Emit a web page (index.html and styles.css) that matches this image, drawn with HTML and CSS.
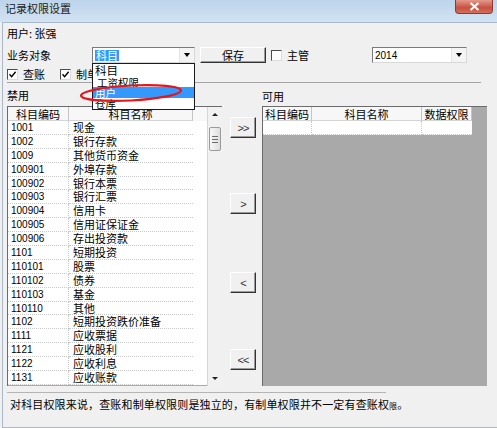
FILE: index.html
```html
<!DOCTYPE html>
<html lang="zh-CN">
<head>
  <meta charset="UTF-8" />
  <title>记录权限设置</title>
  <link rel="stylesheet" href="styles.css">
</head>
<body>
  <div class="window">
    <div class="titlebar">
      <span class="title">记录权限设置</span>
      <span class="close">
        <svg width="11" height="9" viewBox="0 0 11 9"><path d="M1.5 1 L9.5 8 M9.5 1 L1.5 8" stroke="#fff" stroke-width="2.2" /></svg>
      </span>
    </div>

    <div class="body">
      <div class="user">用户: 张强</div>

      <div class="toolbar">
        <span class="field-label">业务对象</span>
        <div class="combo combo-type">
          <span class="sel">科目</span>
          <span class="arrow"><i></i></span>
          <ul class="droplist">
            <li>科目</li>
            <li class="clipped"><span>工资权限</span></li>
            <li class="hl">用户</li>
            <li>仓库</li>
          </ul>
        </div>
        <button class="btn btn-save">保存</button>
        <span class="check"></span><span class="check-text">主管</span>
        <div class="combo combo-year">
          <span class="year">2014</span>
          <span class="arrow"><i></i></span>
        </div>
      </div>

      <div class="checks">
        <span class="check on"><svg width="7" height="7" viewBox="0 0 7 7"><path d="M0.5 3.2 L2.6 5.6 L6.6 0.8" fill="none" stroke="#000" stroke-width="1.4" /></svg></span><span class="check-text">查账</span>
        <span class="check on second"><svg width="7" height="7" viewBox="0 0 7 7"><path d="M0.5 3.2 L2.6 5.6 L6.6 0.8" fill="none" stroke="#000" stroke-width="1.4" /></svg></span><span class="check-text">制单</span>
      </div>

      <div class="sep"></div>

      <div class="lists">
        <div class="pane">
          <div class="pane-label">禁用</div>
          <div class="grid grid-left">
            <div class="grid-main">
              <div class="grid-head"><span class="c-code">科目编码</span><span class="c-name">科目名称</span></div>
              <div class="grid-row"><span class="c-code">1001</span><span class="c-name">现金</span></div>
              <div class="grid-row"><span class="c-code">1002</span><span class="c-name">银行存款</span></div>
              <div class="grid-row"><span class="c-code">1009</span><span class="c-name">其他货币资金</span></div>
              <div class="grid-row"><span class="c-code">100901</span><span class="c-name">外埠存款</span></div>
              <div class="grid-row"><span class="c-code">100902</span><span class="c-name">银行本票</span></div>
              <div class="grid-row"><span class="c-code">100903</span><span class="c-name">银行汇票</span></div>
              <div class="grid-row"><span class="c-code">100904</span><span class="c-name">信用卡</span></div>
              <div class="grid-row"><span class="c-code">100905</span><span class="c-name">信用证保证金</span></div>
              <div class="grid-row"><span class="c-code">100906</span><span class="c-name">存出投资款</span></div>
              <div class="grid-row"><span class="c-code">1101</span><span class="c-name">短期投资</span></div>
              <div class="grid-row"><span class="c-code">110101</span><span class="c-name">股票</span></div>
              <div class="grid-row"><span class="c-code">110102</span><span class="c-name">债券</span></div>
              <div class="grid-row"><span class="c-code">110103</span><span class="c-name">基金</span></div>
              <div class="grid-row"><span class="c-code">110110</span><span class="c-name">其他</span></div>
              <div class="grid-row"><span class="c-code">1102</span><span class="c-name">短期投资跌价准备</span></div>
              <div class="grid-row"><span class="c-code">1111</span><span class="c-name">应收票据</span></div>
              <div class="grid-row"><span class="c-code">1121</span><span class="c-name">应收股利</span></div>
              <div class="grid-row"><span class="c-code">1122</span><span class="c-name">应收利息</span></div>
              <div class="grid-row"><span class="c-code">1131</span><span class="c-name">应收账款</span></div>
            </div>
            <div class="vscroll">
              <span class="sb-btn"><i class="up"></i></span>
              <div class="sb-track"><span class="thumb"><b></b><b></b><b></b></span></div>
              <span class="sb-btn"><i class="down"></i></span>
            </div>
          </div>
        </div>

        <div class="movers">
          <button class="btn mv mv1">&gt;&gt;</button>
          <button class="btn mv mv2">&gt;</button>
          <button class="btn mv mv3">&lt;</button>
          <button class="btn mv mv4">&lt;&lt;</button>
        </div>

        <div class="pane">
          <div class="pane-label pane-label-r">可用</div>
          <div class="grid grid-right">
            <div class="grid-head"><span class="r-code">科目编码</span><span class="r-name">科目名称</span><span class="r-perm">数据权限</span></div>
            <div class="grid-row"><span class="r-code"></span><span class="r-name"></span><span class="r-perm"></span></div>
          </div>
        </div>
      </div>

      <div class="note">对科目权限来说，查账和制单权限则是独立的，有制单权限并不一定有查账权<span class="tiny">限</span>。</div>
    </div>

    <svg class="ring" width="108" height="24" viewBox="0 0 108 24">
      <ellipse cx="53" cy="12" rx="50" ry="7.5" transform="rotate(-3 53 12)" fill="none" stroke="#e3161b" stroke-width="2.2" />
    </svg>
  </div>
</body>
</html>
```

FILE: styles.css
```css
body {
  margin: 0;
  font-family: "Noto Sans CJK SC", sans-serif;
  font-size: 11px;
  color: #000;
  background: #f0f0f0;
}
.window {
  position: relative;
  width: 497px;
  height: 428px;
  overflow: hidden;
  background: #f0f0f0;
}
.titlebar {
  height: 22px;
  box-sizing: border-box;
  padding-left: 5px;
  background: linear-gradient(#bdd4eb, #d2e2f2);
}
.title {
  display: block;
  line-height: 16px;
  color: #1b1b1b;
}
.close {
  position: absolute;
  left: 455px;
  top: 0;
  width: 38px;
  height: 14px;
  box-sizing: border-box;
  border: 1px solid #8c3b33;
  border-top: none;
  border-radius: 0 0 4px 4px;
  background: linear-gradient(#e4998c, #c8503f 60%, #d3705c);
  display: flex;
  align-items: center;
  justify-content: center;
}
.body {
  margin-left: 2px;
  height: 404px;
  padding-left: 4px;
  border-left: 1px solid #a9b9ca;
  border-top: 1px solid #a9b9ca;
  border-bottom: 1px solid #a9b9ca;
}
.user {
  padding-top: 3px;
  line-height: 14px;
}

/* toolbar row */
.toolbar {
  margin-top: 7px;
  height: 16px;
  display: flex;
  align-items: center;
}
.field-label {
  width: 85px;
  line-height: 14px;
}
.combo {
  position: relative;
  height: 16px;
  box-sizing: border-box;
  border: 1px solid #7a7a7a;
  border-right-color: #d8d8d8;
  border-bottom-color: #d8d8d8;
  background: #fff;
  display: flex;
  align-items: center;
}
.combo-type { width: 103px; }
.combo-year {
  width: 95px;
  margin-left: auto;
  margin-right: 30px;
}
.sel {
  margin-left: 2px;
  padding: 0 1px;
  line-height: 11px;
  background: #3399ff;
  color: #fff;
}
.year {
  margin-left: 2px;
  font-family: "Liberation Sans", sans-serif;
  font-size: 10px;
}
.arrow {
  margin-left: auto;
  width: 15px;
  height: 14px;
  box-sizing: border-box;
  border-left: 1px solid #e3e3e3;
  background: #f4f4f4;
  display: flex;
  align-items: center;
  justify-content: center;
}
.arrow i {
  border-left: 3.5px solid transparent;
  border-right: 3.5px solid transparent;
  border-top: 4px solid #000;
}
.droplist {
  position: absolute;
  left: -1px;
  top: 15px;
  width: 103px;
  margin: 0;
  padding: 0;
  list-style: none;
  box-sizing: border-box;
  border: 1px solid #1a1a1a;
  background: #fff;
  z-index: 2;
}
.droplist li {
  height: 11px;
  line-height: 11px;
  font-size: 10.5px;
  padding-left: 2px;
  overflow: hidden;
}
.droplist li:first-child {
  height: 12px;
  line-height: 12px;
  font-size: 11.5px;
}
.droplist .clipped span {
  display: block;
  margin-top: 1px;
  padding-left: 2px;
}
.droplist .hl {
  background: #3399ff;
  color: #fff;
}
.btn {
  font-family: "Noto Sans CJK SC", sans-serif;
  font-size: 11px;
  color: #000;
  padding: 0;
  box-sizing: border-box;
  background: #f0f0f0;
  border: 1px solid #fff;
  border-right-color: #333;
  border-bottom-color: #333;
  box-shadow: inset -1px -1px #9a9a9a;
}
.btn-save {
  margin-left: 5px;
  width: 66px;
  height: 16px;
  line-height: 12px;
}
.check {
  width: 11px;
  height: 11px;
  box-sizing: border-box;
  border: 1px solid #4d4d4d;
  border-right-color: #dcdcdc;
  border-bottom-color: #dcdcdc;
  background: #fff;
  display: inline-flex;
  align-items: center;
  justify-content: center;
}
.toolbar .check { margin-left: 5px; }
.check-text {
  margin-left: 5px;
  line-height: 14px;
}

/* checkbox row */
.checks {
  margin-top: 5px;
  height: 12px;
  display: flex;
  align-items: center;
}
.checks .second { margin-left: 15px; }

.sep {
  margin-top: 2px;
  width: 474px;
  height: 1px;
  background: #a5a5a5;
}

/* lists */
.lists {
  display: flex;
  height: 303px;
}
.pane-label {
  height: 23px;
  box-sizing: border-box;
  padding-top: 5px;
  line-height: 14px;
}
.pane-label-r { padding-top: 6px; }
.grid {
  height: 280px;
  box-sizing: border-box;
  border-top: 1px solid #6b6b6b;
  border-left: 1px solid #6b6b6b;
  background: #a9a9a9;
}
.grid-left {
  width: 215px;
  display: flex;
}
.grid-main { width: 199px; }
.grid-right { width: 225px; }
.grid-head {
  display: flex;
  height: 14px;
  line-height: 14px;
  background: #f7f7f7;
}
.grid-head span {
  box-sizing: border-box;
  text-align: center;
  border-right: 1px solid #c4c4c4;
  border-bottom: 1px solid #d4d4d4;
}
.grid-row {
  display: flex;
  height: 13.9px;
  line-height: 13px;
  background: #fff;
}
.grid-row span {
  box-sizing: border-box;
  border-bottom: 1px dotted #c8c8c8;
}
.c-code { width: 61px; }
.c-name { width: 124px; }
.grid-row .c-code {
  padding-left: 3px;
  font-family: "Liberation Sans", sans-serif;
  font-size: 10px;
  border-right: 1px dotted #c8c8c8;
}
.grid-row .c-name { padding-left: 4px; }
.grid-right .grid-head,
.grid-right .grid-row { width: 209px; }
.r-code { width: 49px; }
.r-name { width: 110px; }
.r-perm { width: 50px; }
.grid-right .grid-row span { border-right: 1px dotted #c8c8c8; }
.grid-right .grid-row .r-perm { border-right: none; }

.vscroll {
  width: 15px;
  box-sizing: border-box;
  border-left: 1px solid #d6d6d6;
  background: #f1f1f1;
  display: flex;
  flex-direction: column;
}
.sb-btn {
  height: 15px;
  display: flex;
  align-items: center;
  justify-content: center;
}
.sb-btn .up {
  border-left: 3px solid transparent;
  border-right: 3px solid transparent;
  border-bottom: 3px solid #222;
}
.sb-btn .down {
  border-left: 3px solid transparent;
  border-right: 3px solid transparent;
  border-top: 3px solid #222;
}
.sb-track {
  flex: 1;
  padding-top: 5px;
}
.thumb {
  margin-left: 1px;
  width: 12px;
  height: 24px;
  box-sizing: border-box;
  border: 1px solid #9a9a9a;
  border-radius: 2px;
  background: linear-gradient(90deg, #f7f7f7, #dedede);
  display: flex;
  flex-direction: column;
  align-items: center;
  justify-content: center;
  gap: 2px;
}
.thumb b {
  width: 6px;
  height: 1px;
  background: #6c6c6c;
}

.movers {
  width: 40px;
  padding-left: 8px;
  box-sizing: border-box;
  display: flex;
  flex-direction: column;
  align-items: flex-start;
}
.mv {
  width: 26px;
  height: 21px;
  font-family: "Liberation Sans", sans-serif;
  font-size: 11px;
  letter-spacing: -1px;
  color: #333;
}
.mv1 { margin-top: 34px; }
.mv2 { margin-top: 55px; }
.mv3 { margin-top: 58px; }
.mv4 { margin-top: 56px; }

.note {
  margin-top: 6px;
  width: 376px;
  padding-top: 4px;
  padding-left: 3px;
  line-height: 14px;
  border-top: 1px solid #b4b4b4;
  white-space: nowrap;
  letter-spacing: 0.15px;
}
.tiny { font-size: 8px; }

.ring {
  position: absolute;
  left: 78px;
  top: 81px;
  z-index: 3;
}
```
